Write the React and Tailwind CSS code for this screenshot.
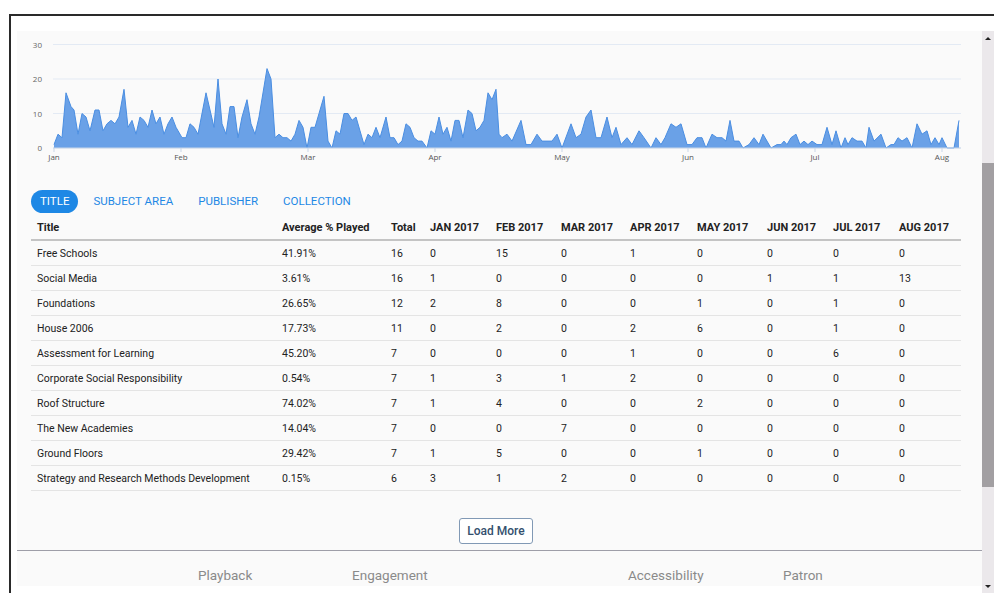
import React from "react";

// daily plays: [x position, count]
const SERIES = [
  [54, 1], [58, 4], [62, 3], [66, 16], [71, 12], [74, 11], [78, 4], [82, 10], [86, 9], [90, 5],
  [95, 11], [99, 11], [103, 5], [107, 7], [111, 8], [115, 7], [119, 9], [124, 17], [128, 6], [132, 8],
  [136, 4], [140, 9], [144, 8], [148, 6], [152, 11], [156, 7], [160, 9], [164, 4], [168, 7], [172, 9],
  [176, 6], [182, 3], [186, 3], [190, 7], [194, 6], [198, 4], [206, 16], [210, 11], [214, 6], [218, 20],
  [222, 7], [226, 4], [230, 12], [234, 12], [238, 3], [242, 9], [247, 14], [251, 7], [255, 4], [259, 9],
  [267, 23], [271, 20], [275, 3], [279, 4], [283, 3], [287, 3], [291, 2], [295, 4], [299, 8], [303, 6],
  [307, 0], [311, 6], [315, 6], [319, 10], [324, 15], [328, 2], [332, 0], [336, 5], [340, 4], [344, 10],
  [348, 10], [352, 8], [356, 9], [360, 5], [364, 1], [368, 4], [372, 3], [376, 6], [380, 3], [386, 9],
  [390, 3], [394, 3], [398, 1], [402, 2], [406, 7], [410, 6], [414, 3], [418, 2], [422, 2], [427, 0],
  [431, 5], [435, 4], [439, 9], [443, 4], [447, 6], [451, 2], [455, 8], [459, 8], [463, 3], [468, 11],
  [472, 10], [476, 5], [480, 6], [484, 8], [488, 16], [492, 14], [496, 17], [499, 4], [502, 3], [507, 4],
  [512, 2], [521, 8], [526, 1], [531, 1], [537, 4], [542, 2], [547, 2], [552, 2], [557, 4], [562, 0],
  [571, 7], [576, 3], [581, 4], [586, 9], [591, 11], [596, 3], [601, 3], [607, 9], [612, 3], [616, 6],
  [621, 1], [627, 3], [632, 1], [639, 5], [644, 3], [651, 0], [656, 3], [661, 1], [665, 3], [671, 7],
  [676, 6], [681, 7], [687, 1], [692, 1], [697, 3], [702, 3], [706, 0], [712, 4], [717, 3], [722, 3],
  [726, 2], [730, 8], [734, 2], [739, 2], [743, 0], [749, 1], [754, 3], [759, 1], [763, 4], [767, 2],
  [771, 0], [777, 1], [781, 1], [784, 2], [787, 1], [791, 3], [796, 4], [800, 1], [804, 2], [808, 1],
  [812, 2], [817, 1], [822, 1], [827, 6], [832, 1], [836, 5], [841, 0], [845, 3], [848, 1], [852, 3],
  [857, 2], [862, 2], [866, 0], [869, 6], [874, 2], [881, 4], [886, 0], [891, 1], [894, 1], [898, 3],
  [902, 2], [907, 3], [912, 0], [917, 7], [922, 4], [927, 5], [931, 1], [935, 3], [939, 1], [942, 3],
  [947, 0], [954, 0], [959, 8],
];

const BASE = 148;
const UNIT = 3.45;

const MONTHS = [
  ["Jan", 54], ["Feb", 181], ["Mar", 308], ["Apr", 435],
  ["May", 562], ["Jun", 688], ["Jul", 815], ["Aug", 942],
];

const ROWS = [
  ["Free Schools", "41.91%", 16, 0, 15, 0, 1, 0, 0, 0, 0],
  ["Social Media", "3.61%", 16, 1, 0, 0, 0, 0, 1, 1, 13],
  ["Foundations", "26.65%", 12, 2, 8, 0, 0, 1, 0, 1, 0],
  ["House 2006", "17.73%", 11, 0, 2, 0, 2, 6, 0, 1, 0],
  ["Assessment for Learning", "45.20%", 7, 0, 0, 0, 1, 0, 0, 6, 0],
  ["Corporate Social Responsibility", "0.54%", 7, 1, 3, 1, 2, 0, 0, 0, 0],
  ["Roof Structure", "74.02%", 7, 1, 4, 0, 0, 2, 0, 0, 0],
  ["The New Academies", "14.04%", 7, 0, 0, 7, 0, 0, 0, 0, 0],
  ["Ground Floors", "29.42%", 7, 1, 5, 0, 0, 1, 0, 0, 0],
  ["Strategy and Research Methods Development", "0.15%", 6, 3, 1, 2, 0, 0, 0, 0, 0],
];

const HEADERS = [
  "Title", "Average % Played", "Total", "JAN 2017", "FEB 2017", "MAR 2017",
  "APR 2017", "MAY 2017", "JUN 2017", "JUL 2017", "AUG 2017",
];

const GRID =
  "grid grid-cols-[245px_109px_39px_66px_65px_69px_67px_70px_66px_66px_68px]";

function PlaysChart() {
  const pts = SERIES.map(([x, v]) => `${x},${(BASE - v * UNIT).toFixed(1)}`);
  const area = `M54,${BASE} L${pts.join(" L")} L959,${BASE} Z`;
  const line = `M${pts.join(" L")}`;

  return (
    <svg width="965" height="140" viewBox="17 31 965 140" className="block">
      {[0, 10, 20, 30].map((v) => {
        const y = BASE - v * UNIT;
        return (
          <g key={v}>
            <line x1="53" x2="961" y1={y} y2={y} stroke="#e3eaf4" strokeWidth="1" />
            <text
              x="42"
              y={y + 3}
              textAnchor="end"
              fontSize="8"
              fill="#666"
              fontFamily="'Open Sans', sans-serif"
            >
              {v}
            </text>
          </g>
        );
      })}
      <path d={area} fill="#6aa1e7" />
      <path d={line} fill="none" stroke="#4a8ee2" strokeWidth="1" strokeLinejoin="round" />
      <line x1="53" x2="961" y1={BASE} y2={BASE} stroke="#c9d6e8" strokeWidth="1" />
      {MONTHS.map(([m, x]) => (
        <g key={m}>
          <line x1={x} x2={x} y1={BASE} y2={BASE + 4} stroke="#c9d6e8" strokeWidth="1" />
          <text
            x={x}
            y={BASE + 12}
            textAnchor="middle"
            fontSize="8"
            fill="#555"
            fontFamily="'Open Sans', sans-serif"
          >
            {m}
          </text>
        </g>
      ))}
    </svg>
  );
}

function Tabs() {
  const tabs = ["TITLE", "SUBJECT AREA", "PUBLISHER", "COLLECTION"];
  return (
    <div className="flex items-center gap-[5px] ml-[14px] mt-[19px]">
      {tabs.map((t, i) => (
        <button
          key={t}
          className={
            i === 0
              ? "h-[23px] px-[9px] pt-[1px] rounded-full bg-[#1e88e5] text-white text-[11.5px] leading-none"
              : "h-[23px] px-[10px] pt-[1px] text-[#1e88e5] text-[11.5px] leading-none"
          }
        >
          {t}
        </button>
      ))}
    </div>
  );
}

function PlaysTable() {
  return (
    <div className="ml-[14px] w-[930px]">
      <div className={`${GRID} h-[28px] items-center pt-[4px] border-b-2 border-[#c4c4c4] text-[11px] font-bold text-[#222]`}>
        {HEADERS.map((h) => (
          <div key={h} className="pl-[6px] whitespace-nowrap">{h}</div>
        ))}
      </div>
      {ROWS.map((r) => (
        <div
          key={r[0]}
          className={`${GRID} h-[25px] items-center pt-[1px] border-b border-[#e4e4e4] text-[10.5px] text-[#222]`}
        >
          {r.map((c, i) => (
            <div key={i} className="pl-[6px] whitespace-nowrap">{c}</div>
          ))}
        </div>
      ))}
      <div className="flex justify-center mt-[27px]">
        <button className="h-[26px] w-[74px] border border-[#8199b5] rounded-[3px] text-[12px] text-[#34506e] font-medium bg-white">
          Load More
        </button>
      </div>
    </div>
  );
}

function Scrollbar() {
  return (
    <div className="w-[12px] h-[562px] bg-[#ebe8eb] flex flex-col items-center">
      <div className="h-[14px] flex items-center justify-center">
        <div className="w-0 h-0 border-l-[3px] border-r-[3px] border-b-[3px] border-l-transparent border-r-transparent border-b-[#222]" />
      </div>
      <div className="mt-[118px] h-[324px] w-[12px] bg-[#a29fa2]" />
      <div className="flex-1" />
      <div className="h-[14px] flex items-center justify-center">
        <div className="w-0 h-0 border-l-[3px] border-r-[3px] border-t-[3px] border-l-transparent border-r-transparent border-t-[#222]" />
      </div>
    </div>
  );
}

export default function App() {
  return (
    <div
      className="h-[593px] overflow-hidden bg-white pt-[14px] pl-[9px]"
      style={{ fontFamily: "Roboto, 'Liberation Sans', sans-serif" }}
    >
      <div className="h-[579px] border-t-2 border-l-2 border-[#2a2a2a] pt-[15px] pl-[6px] flex items-start">
        <div className="w-[965px] h-[555px] bg-[#fafafa] flex flex-col">
          <PlaysChart />
          <Tabs />
          <PlaysTable />
          <div className="mt-[6px] border-t border-[#9e9ea8]" />
          <div className="flex items-start pt-[16px] text-[13.5px] leading-[17px] text-[#8a8a8a]">
            <div className="w-[181px]" />
            <div className="w-[154px]">Playback</div>
            <div className="w-[276px]">Engagement</div>
            <div className="w-[155px]">Accessibility</div>
            <div>Patron</div>
          </div>
        </div>
        <Scrollbar />
      </div>
    </div>
  );
}
